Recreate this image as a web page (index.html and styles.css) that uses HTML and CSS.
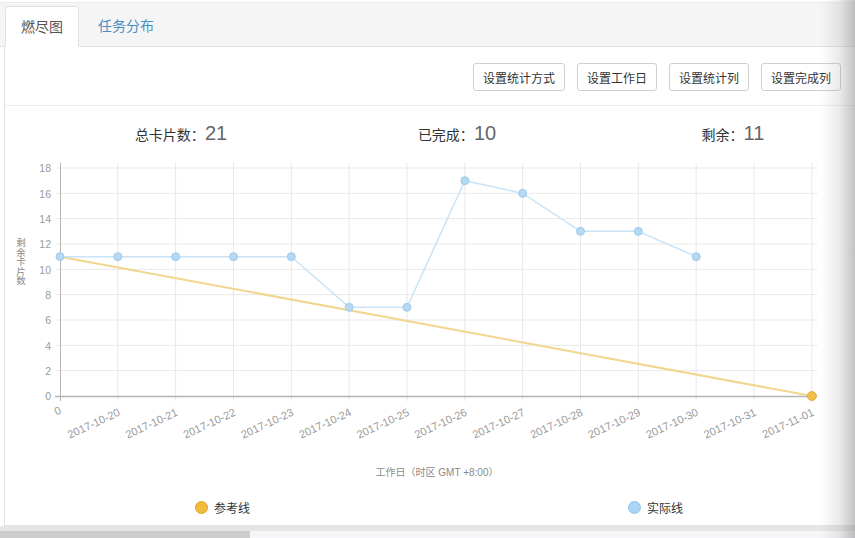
FILE: index.html
```html
<!DOCTYPE html>
<html lang="zh">
<head>
<meta charset="utf-8">
<title>燃尽图</title>
<link rel="stylesheet" href="styles.css">
</head>
<body>
<div class="window">
  <div class="tabs">
    <div class="tab active">燃尽图</div>
    <div class="tab link">任务分布</div>
  </div>
  <div class="panel">
    <div class="toolbar">
      <button class="btn">设置统计方式</button>
      <button class="btn">设置工作日</button>
      <button class="btn">设置统计列</button>
      <button class="btn">设置完成列</button>
    </div>
    <div class="stats">
      <div class="stat"><span class="stat-label">总卡片数：</span><span class="stat-num">21</span></div>
      <div class="stat"><span class="stat-label">已完成：</span><span class="stat-num">10</span></div>
      <div class="stat"><span class="stat-label">剩余：</span><span class="stat-num">11</span></div>
    </div>
    <svg class="chart" width="850" height="334" viewBox="0 0 850 334">
      <g transform="translate(-5,-156)">
        <g class="grid">
          <line x1="56" y1="370.67" x2="817" y2="370.67"/>
          <line x1="56" y1="345.33" x2="817" y2="345.33"/>
          <line x1="56" y1="320" x2="817" y2="320"/>
          <line x1="56" y1="294.67" x2="817" y2="294.67"/>
          <line x1="56" y1="269.33" x2="817" y2="269.33"/>
          <line x1="56" y1="244" x2="817" y2="244"/>
          <line x1="56" y1="218.67" x2="817" y2="218.67"/>
          <line x1="56" y1="193.33" x2="817" y2="193.33"/>
          <line x1="56" y1="168" x2="817" y2="168"/>
          <line x1="117.83" y1="163" x2="117.83" y2="401"/>
          <line x1="175.67" y1="163" x2="175.67" y2="401"/>
          <line x1="233.5" y1="163" x2="233.5" y2="401"/>
          <line x1="291.33" y1="163" x2="291.33" y2="401"/>
          <line x1="349.17" y1="163" x2="349.17" y2="401"/>
          <line x1="407" y1="163" x2="407" y2="401"/>
          <line x1="464.83" y1="163" x2="464.83" y2="401"/>
          <line x1="522.67" y1="163" x2="522.67" y2="401"/>
          <line x1="580.5" y1="163" x2="580.5" y2="401"/>
          <line x1="638.33" y1="163" x2="638.33" y2="401"/>
          <line x1="696.17" y1="163" x2="696.17" y2="401"/>
          <line x1="754" y1="163" x2="754" y2="401"/>
          <line x1="811.83" y1="163" x2="811.83" y2="401"/>
        </g>
        <line class="axis" x1="60.5" y1="163" x2="60.5" y2="401"/>
        <line class="axis x-axis" x1="55" y1="396.5" x2="817" y2="396.5"/>
        <g class="ytick">
          <text x="51" y="400">0</text>
          <text x="51" y="374.5">2</text>
          <text x="51" y="349.5">4</text>
          <text x="51" y="324">6</text>
          <text x="51" y="298.5">8</text>
          <text x="51" y="273.5">10</text>
          <text x="51" y="248">12</text>
          <text x="51" y="222.5">14</text>
          <text x="51" y="197.5">16</text>
          <text x="51" y="172">18</text>
        </g>
        <g class="xtick">
          <text x="62" y="413" transform="rotate(-25 62 413)">0</text>
          <text x="120.83" y="415" transform="rotate(-25 120.83 415)">2017-10-20</text>
          <text x="178.67" y="415" transform="rotate(-25 178.67 415)">2017-10-21</text>
          <text x="236.5" y="415" transform="rotate(-25 236.5 415)">2017-10-22</text>
          <text x="294.33" y="415" transform="rotate(-25 294.33 415)">2017-10-23</text>
          <text x="352.17" y="415" transform="rotate(-25 352.17 415)">2017-10-24</text>
          <text x="410" y="415" transform="rotate(-25 410 415)">2017-10-25</text>
          <text x="467.83" y="415" transform="rotate(-25 467.83 415)">2017-10-26</text>
          <text x="525.67" y="415" transform="rotate(-25 525.67 415)">2017-10-27</text>
          <text x="583.5" y="415" transform="rotate(-25 583.5 415)">2017-10-28</text>
          <text x="641.33" y="415" transform="rotate(-25 641.33 415)">2017-10-29</text>
          <text x="699.17" y="415" transform="rotate(-25 699.17 415)">2017-10-30</text>
          <text x="757" y="415" transform="rotate(-25 757 415)">2017-10-31</text>
          <text x="814.83" y="415" transform="rotate(-25 814.83 415)">2017-11-01</text>
        </g>
        <text class="axis-title" x="437" y="476">工作日（时区 GMT +8:00）</text>
        <text class="y-title" x="21" y="238">剩余卡片数</text>
        <line class="ref-line" x1="60" y1="256.67" x2="811.83" y2="396"/>
        <circle class="ref-pt" cx="811.83" cy="396" r="4.5"/>
        <polyline class="act-line" points="60,256.67 117.83,256.67 175.67,256.67 233.5,256.67 291.33,256.67 349.17,307.33 407,307.33 464.83,180.67 522.67,193.33 580.5,231.33 638.33,231.33 696.17,256.67"/>
        <g class="act-pt">
          <circle cx="60" cy="256.67" r="4"/>
          <circle cx="117.83" cy="256.67" r="4"/>
          <circle cx="175.67" cy="256.67" r="4"/>
          <circle cx="233.5" cy="256.67" r="4"/>
          <circle cx="291.33" cy="256.67" r="4"/>
          <circle cx="349.17" cy="307.33" r="4"/>
          <circle cx="407" cy="307.33" r="4"/>
          <circle cx="464.83" cy="180.67" r="4"/>
          <circle cx="522.67" cy="193.33" r="4"/>
          <circle cx="580.5" cy="231.33" r="4"/>
          <circle cx="638.33" cy="231.33" r="4"/>
          <circle cx="696.17" cy="256.67" r="4"/>
        </g>
      </g>
    </svg>
    <div class="legend">
      <div class="legend-item"><span class="dot dot-ref"></span>参考线</div>
      <div class="legend-item"><span class="dot dot-act"></span>实际线</div>
    </div>
  </div>
  <div class="footer-strip"><div class="strip-left"></div></div>
</div>
</body>
</html>
```
FILE: styles.css
```css
* { box-sizing: border-box; }
html, body { margin: 0; padding: 0; }
body {
  background: #fff;
  font-family: "Liberation Sans", "Noto Sans CJK SC", sans-serif;
  color: #333;
}
.window {
  position: relative;
  width: 855px;
  height: 538px;
  overflow: hidden;
  background: #fff;
}
.window::after {
  content: "";
  position: absolute;
  top: 0;
  right: 0;
  width: 34px;
  height: 100%;
  background: linear-gradient(to right, rgba(140,140,140,0), rgba(140,140,140,0.18) 55%, rgba(120,120,120,0.45));
  pointer-events: none;
}
.tabs {
  margin-top: 2px;
  height: 45px;
  border-top: 1px solid #ececec;
  border-bottom: 1px solid #e2e2e2;
  background: #f5f5f5;
  display: flex;
  align-items: flex-end;
  padding-left: 5px;
}
.tab {
  height: 41px;
  line-height: 40px;
  font-size: 14px;
  padding: 0 15px;
  margin-bottom: -1px;
}
.tab.active {
  background: #fff;
  color: #555;
  border: 1px solid #e2e2e2;
  border-bottom-color: #fff;
  border-radius: 4px 4px 0 0;
}
.tab.link {
  color: #4b8ec4;
  margin-left: 4px;
}
.panel {
  margin-left: 4px;
  height: 479px;
  border-left: 1px solid #e2e2e2;
  border-bottom: 1px solid #e4e4e4;
  display: flex;
  flex-direction: column;
}
.toolbar {
  display: flex;
  justify-content: flex-end;
  gap: 12px;
  padding: 16px 14px 14px 0;
  border-bottom: 1px solid #eeeeee;
}
.btn {
  height: 28px;
  padding: 0 9px;
  font-family: "Liberation Sans", "Noto Sans CJK SC", sans-serif;
  font-size: 12px;
  color: #333;
  background: #fff;
  border: 1px solid #cfcfcf;
  border-radius: 3px;
}
.stats {
  height: 50px;
  padding: 4px 0 0 38px;
  display: grid;
  grid-template-columns: 276px 276px 276px;
  align-items: center;
  justify-items: center;
}
.stat {
  display: flex;
  align-items: baseline;
}
.stat-label {
  font-size: 14px;
  color: #333;
}
.stat-num {
  font-size: 20px;
  color: #666;
}
.chart {
  display: block;
  flex: none;
}
.grid line { stroke: #e8e8e8; stroke-width: 1; }
.axis { stroke: #b4b4b4; stroke-width: 1; }
.x-axis { stroke-width: 1.5; }
.ytick text {
  font-size: 10.5px;
  fill: #9a9a9a;
  text-anchor: end;
  font-family: "Liberation Sans", sans-serif;
}
.xtick text {
  font-size: 11px;
  fill: #9a9a9a;
  text-anchor: end;
  font-family: "Liberation Sans", sans-serif;
}
.axis-title {
  font-size: 10px;
  fill: #8a8a8a;
  text-anchor: middle;
  font-family: "Liberation Sans", "Noto Sans CJK SC", sans-serif;
}
.y-title {
  font-size: 9.5px;
  fill: #8a8a8a;
  writing-mode: vertical-rl;
  font-family: "Noto Sans CJK SC", sans-serif;
}
.ref-line { stroke: #f1d68e; stroke-width: 2; }
.ref-pt { fill: #efbf4c; stroke: #e6b03c; stroke-width: 1; }
.act-line { fill: none; stroke: #c9e4f6; stroke-width: 1.5; }
.act-pt circle { fill: #b5d9f3; stroke: #9fcbec; stroke-width: 1; }
.legend {
  flex: 1;
  display: grid;
  grid-template-columns: 433px 300px;
  padding-left: 190px;
  align-items: center;
}
.legend-item {
  display: flex;
  align-items: center;
  gap: 6px;
  font-size: 12px;
  color: #333;
  font-family: "Noto Sans CJK SC", sans-serif;
}
.dot {
  width: 13px;
  height: 13px;
  border-radius: 50%;
}
.dot-ref { background: #f1bb3c; border: 1px solid #e0a52a; }
.dot-act { background: #acd4f4; border: 1px solid #93c2ea; }
.footer-strip {
  height: 12px;
  background: #f6f5f8;
  border-top: 5px solid #e6e6e6;
}
.strip-left {
  width: 250px;
  height: 7px;
  background: #cdcdcd;
}
```
